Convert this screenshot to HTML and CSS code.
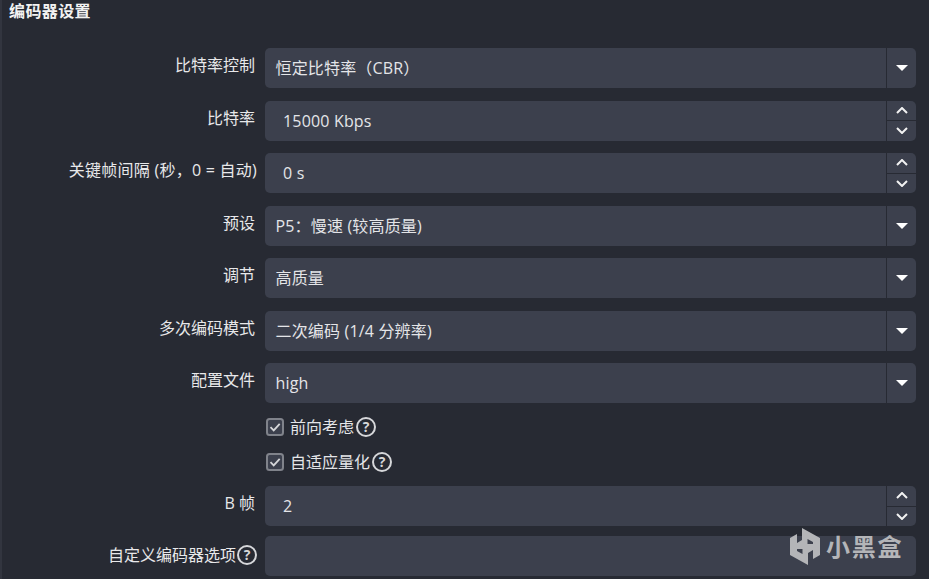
FILE: index.html
```html
<!DOCTYPE html>
<html lang="zh-CN">
<head>
<meta charset="utf-8">
<title>编码器设置</title>
<link rel="stylesheet" href="styles.css">
</head>
<body>
<main class="panel">
  <h1 class="title">编码器设置</h1>
  <div class="form">
    <div class="row"><label class="label">比特率控制</label><div class="field combo"><span class="value">恒定比特率（CBR）</span><span class="drop"><i class="tri"></i></span></div></div>
    <div class="row"><label class="label">比特率</label><div class="field spin"><span class="value">15000 Kbps</span><span class="steps"><span class="step"><svg class="chev" viewBox="0 0 12 7"><path d="M1 6l5-5 5 5"/></svg></span><span class="step"><svg class="chev" viewBox="0 0 12 7"><path d="M1 1l5 5 5-5"/></svg></span></span></div></div>
    <div class="row"><label class="label label-wide">关键帧间隔 (秒，0 = 自动)</label><div class="field spin"><span class="value">0 s</span><span class="steps"><span class="step"><svg class="chev" viewBox="0 0 12 7"><path d="M1 6l5-5 5 5"/></svg></span><span class="step"><svg class="chev" viewBox="0 0 12 7"><path d="M1 1l5 5 5-5"/></svg></span></span></div></div>
    <div class="row"><label class="label">预设</label><div class="field combo"><span class="value">P5：慢速 (较高质量)</span><span class="drop"><i class="tri"></i></span></div></div>
    <div class="row"><label class="label">调节</label><div class="field combo"><span class="value">高质量</span><span class="drop"><i class="tri"></i></span></div></div>
    <div class="row"><label class="label">多次编码模式</label><div class="field combo"><span class="value">二次编码 (1/4 分辨率)</span><span class="drop"><i class="tri"></i></span></div></div>
    <div class="row"><label class="label">配置文件</label><div class="field combo"><span class="value">high</span><span class="drop"><i class="tri"></i></span></div></div>
    <div class="checks">
      <div class="check"><svg class="box" viewBox="0 0 18 18"><rect x="1" y="1" width="16" height="16" rx="2.5"/><path d="M4.5 9.2l3.2 3.2 6-6.6"/></svg><span class="check-text">前向考虑</span><span class="help">?</span></div>
      <div class="check"><svg class="box" viewBox="0 0 18 18"><rect x="1" y="1" width="16" height="16" rx="2.5"/><path d="M4.5 9.2l3.2 3.2 6-6.6"/></svg><span class="check-text">自适应量化</span><span class="help">?</span></div>
    </div>
    <div class="row row-b"><label class="label">B 帧</label><div class="field spin"><span class="value">2</span><span class="steps"><span class="step"><svg class="chev" viewBox="0 0 12 7"><path d="M1 6l5-5 5 5"/></svg></span><span class="step"><svg class="chev" viewBox="0 0 12 7"><path d="M1 1l5 5 5-5"/></svg></span></span></div></div>
    <div class="row"><label class="label label-last">自定义编码器选项<span class="help help-label">?</span></label><div class="field"></div></div>
  </div>
  <div class="mark">
    <svg class="mark-logo" viewBox="0 0 30 37"><path d="M12 0L30 10V27L23 31V14L17.5 11V21H7V15L12 12Z"/><path d="M18 37L0 27V10L7 6V23L12.5 26V16H23V22L18 25Z"/></svg>
    <span class="mark-text">小黑盒</span>
  </div>
</main>
</body>
</html>
```
FILE: styles.css
```css
* { box-sizing: border-box; }
html, body { margin: 0; height: 100%; }
body {
  background: #272a33;
  color: #e4e5e8;
  font-family: "Open Sans", "Noto Sans CJK SC", sans-serif;
  font-size: 16px;
  overflow: hidden;
}
.panel {
  position: relative;
  height: 579px;
  border-left: 2px solid #32353f;
  padding-left: 7px;
  overflow: hidden;
}
.title {
  margin: 0;
  height: 48px;
  font-size: 16px;
  font-weight: 700;
  letter-spacing: .4px;
  line-height: 22px;
  color: #f2f2f2;
}
.form { margin-left: -9px; display: flex; flex-direction: column; }
.row {
  display: grid;
  grid-template-columns: 257px 651px;
  column-gap: 8px;
  height: 40px;
  margin-bottom: 12.5px;
}
.row-b { margin-bottom: 10px; }
.label {
  display: flex;
  justify-content: flex-end;
  align-items: center;
  height: 34px;
  padding-right: 2px;
  white-space: nowrap;
  line-height: 22px;
  color: #e8e8ea;
}
.label-wide { padding-right: 0; letter-spacing: .25px; }
.label-last { height: 37px; padding-right: 0; }
.field {
  position: relative;
  display: flex;
  align-items: center;
  height: 40px;
  background: #3c404d;
  border-radius: 5px;
  overflow: hidden;
}
.value { flex: 1; padding-left: 10.5px; white-space: nowrap; line-height: 22px; letter-spacing: .17px; }
.spin .value { padding-left: 18px; }
.drop {
  width: 30px;
  height: 100%;
  margin-left: -1px;
  flex: none;
  border-left: 1.5px solid #272a33;
  display: flex;
  align-items: center;
  justify-content: center;
}
.tri {
  width: 0;
  height: 0;
  border-left: 6px solid transparent;
  border-right: 6px solid transparent;
  border-top: 6px solid #fff;
}
.steps {
  width: 30px;
  height: 100%;
  flex: none;
  border-left: 1.5px solid #272a33;
  display: flex;
  flex-direction: column;
}
.step {
  flex: 1;
  display: flex;
  align-items: center;
  justify-content: center;
}
.step + .step { border-top: 1px solid #272a33; }
.chev { width: 12px; height: 7px; fill: none; stroke: #f2f2f2; stroke-width: 2; }
.checks {
  margin: -6px 0 6.5px 265px;
  display: flex;
  flex-direction: column;
}
.check { display: flex; align-items: center; height: 35px; }
.box { width: 18px; height: 18px; margin-left: 1px; flex: none; }
.box rect { fill: #3c404d; stroke: #80838b; stroke-width: 2; }
.box path { fill: none; stroke: #d6d7da; stroke-width: 1.8; }
.check-text { margin-left: 6px; line-height: 22px; }
.help {
  display: inline-flex;
  align-items: center;
  justify-content: center;
  width: 20px;
  height: 20px;
  margin-left: 2px;
  border: 2px solid #d6d7da;
  border-radius: 50%;
  font-size: 14px;
  font-weight: 700;
  line-height: 1;
  color: #d6d7da;
}
.help-label { margin-left: 1px; }
.mark {
  position: absolute;
  left: 788px;
  top: 528px;
  display: flex;
  align-items: center;
  gap: 6px;
  color: #b4b5b8;
}
.mark-logo { width: 30px; height: 37px; fill: #b4b5b8; }
.mark-text { font-size: 24px; font-weight: 700; line-height: 36px; letter-spacing: 1.8px; }
```
